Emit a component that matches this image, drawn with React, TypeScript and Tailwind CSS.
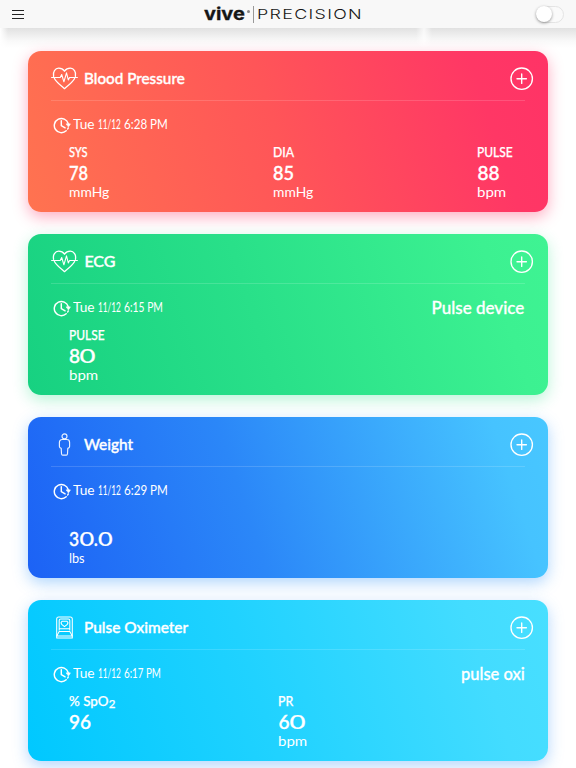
import { useLayoutEffect, useRef, useState } from "react";
import type { ReactNode } from "react";

/** A single line of text whose glyphs are condensed or widened to fill a given width. */
function Fit({ w, className = "", children }: { w: number; className?: string; children: ReactNode }) {
  const ref = useRef<HTMLSpanElement>(null);
  const [scale, setScale] = useState(1);
  useLayoutEffect(() => {
    if (ref.current) setScale(w / ref.current.offsetWidth);
  }, [w]);
  return (
    <span className={`block shrink-0 whitespace-nowrap ${className}`} style={{ width: w }}>
      <span ref={ref} className="inline-block origin-left" style={{ transform: `scaleX(${scale})` }}>
        {children}
      </span>
    </span>
  );
}

function HeartIcon() {
  return (
    <svg className="h-[23px] w-[27px]" viewBox="0 0 27 23" fill="none" stroke="white" strokeWidth="1.3" strokeLinejoin="round" strokeLinecap="round">
      <path d="M2.6 9.300C1.600 4.700 4.200 1.200 7.700 1.200c2.600 0 4.500 1.100 5.800 3 1.300-1.900 3.200-3 5.800-3 3.500 0 6.100 3.500 5.100 8.100M3.400 11.500c1.800 3.500 6.300 7 10.100 10.200 3.800-3.200 8.300-6.700 10.100-10.200" />
      <path strokeWidth="1.1" d="M.6 10.500h8.600l1.500-3 2.200 7.300 2.600-8.900 1.800 7 1.300-2.400h7.800" />
    </svg>
  );
}

function PersonIcon() {
  return (
    <svg className="h-[23px] w-[27px]" viewBox="0 0 27 23" fill="none" stroke="white" strokeWidth="1.15" strokeOpacity=".9" strokeLinejoin="round">
      <circle cx="13.5" cy="3.300" r="2.500" />
      <path d="M11.200 6.500h4.600c1.800 0 2.800 1.200 2.800 2.900v4.100c0 1.100-.6 1.600-1.800 1.900l-.3 5.300c-.1 1-.5 1.400-1.200 1.400h-3.600c-.7 0-1.100-.4-1.200-1.400l-.3-5.300c-1.200-.3-1.800-.8-1.800-1.900V9.400c0-1.700 1-2.900 2.800-2.900Z" />
    </svg>
  );
}

function OximeterIcon() {
  return (
    <svg className="h-[23px] w-[27px]" viewBox="0 0 27 23" fill="none" stroke="white" strokeWidth="1.05" strokeLinejoin="round">
      <path d="M5.700 21.900V3q0-2 2-2h11.600q2 0 2 2v18.900Z" />
      <path d="M8.200 14.500V4.500Q8.200 3 9.700 3h7.600q1.500 0 1.500 1.500v10M8.200 12.800h10.600M8.200 15.500h10.600l2.500 4.500H5.700l2.500-4.500Z" />
      <path d="M11 5.200h5l1 1.500-.7 1.700-2.800 2.300-2.800-2.300-.7-1.700Z" />
    </svg>
  );
}

function ClockIcon() {
  return (
    <svg className="h-[17px] w-[18px]" viewBox="0 0 18 17" fill="none" stroke="white" strokeWidth="1.45" strokeLinecap="round" strokeLinejoin="round">
      <path d="M15.200 6.500A7.100 7.100 0 1 0 13.200 13.800" />
      <path d="M8.300 3.600v5.100l3.800 2.100" />
      <path d="M13.600 6.900h3.700l-1.700 2.700Z" fill="white" strokeWidth=".8" />
      <path d="M15.300 10.900l-.6 1.100" />
    </svg>
  );
}

function PlusIcon() {
  return (
    <svg className="h-6 w-6" viewBox="0 0 24 24" fill="none" stroke="white" strokeWidth="1.35" strokeLinecap="round">
      <circle cx="11.700" cy="11.700" r="10.700" />
      <path d="M11.700 7v9.400M7 11.700h9.400" />
    </svg>
  );
}

/** The wide, circular zero of large readings. */
function Zero() {
  return <span className="mx-[2.500px] inline-block scale-x-[1.45] font-normal [-webkit-text-stroke:0.2px_white]">0</span>;
}

type Text = { w: number; text: ReactNode };
type Reading = { at: string; label?: Text; value: Text; unit?: Text };
type CardData = {
  surface: string;
  icon: ReactNode;
  title: Text;
  time: { w: number; clock: string };
  device?: Text;
  readings: Reading[];
};

const cards: CardData[] = [
  {
    surface: "bg-[linear-gradient(72deg,#ff7350_0%,#ff5558_48%,#ff3765_86%,#ff3366_100%)] shadow-[0_5px_15px_rgba(255,51,102,0.4)]",
    icon: <HeartIcon />,
    title: { w: 101, text: "Blood Pressure" },
    time: { w: 44, clock: "6:28 PM" },
    readings: [
      { at: "ml-[40.500px]", label: { w: 19, text: "SYS" }, value: { w: 19, text: "78" }, unit: { w: 40, text: "mmHg" } },
      { at: "ml-[245px]", label: { w: 21, text: "DIA" }, value: { w: 21, text: "85" }, unit: { w: 40, text: "mmHg" } },
      { at: "ml-[449px]", label: { w: 36, text: "PULSE" }, value: { w: 22, text: "88" }, unit: { w: 29, text: "bpm" } },
    ],
  },
  {
    surface: "bg-[linear-gradient(72deg,#17d181_0%,#29e089_44%,#3cf191_88%,#3ff393_100%)] shadow-[0_5px_15px_rgba(38,220,134,0.32)]",
    icon: <HeartIcon />,
    title: { w: 31, text: "ECG" },
    time: { w: 39, clock: "6:15 PM" },
    device: { w: 93, text: "Pulse device" },
    readings: [{ at: "ml-[40.500px]", label: { w: 36, text: "PULSE" }, value: { w: 27, text: <>8<Zero /></> }, unit: { w: 29, text: "bpm" } }],
  },
  {
    surface: "bg-[linear-gradient(72deg,#1c62f5_0%,#2b87f8_42%,#46c3ff_90%,#48c7ff_100%)] shadow-[0_5px_15px_rgba(50,150,250,0.38)]",
    icon: <PersonIcon />,
    title: { w: 49, text: "Weight" },
    time: { w: 44, clock: "6:29 PM" },
    readings: [{ at: "ml-[40.500px]", value: { w: 44, text: <>3<Zero />.<Zero /></> }, unit: { w: 16, text: "lbs" } }],
  },
  {
    surface: "bg-[linear-gradient(72deg,#00c8ff_0%,#20d2ff_44%,#43dcff_85%,#48dfff_100%)] shadow-[0_5px_15px_rgba(60,150,250,0.38)]",
    icon: <OximeterIcon />,
    title: { w: 104, text: "Pulse Oximeter" },
    time: { w: 37, clock: "6:17 PM" },
    device: { w: 64, text: "pulse oxi" },
    readings: [
      { at: "ml-[40.500px]", label: { w: 46, text: <>% SpO<span className="relative top-[2px] text-[12px]">2</span></> }, value: { w: 22, text: "96" } },
      { at: "ml-[250px]", label: { w: 15, text: "PR" }, value: { w: 27, text: <>6<Zero /></> }, unit: { w: 29, text: "bpm" } },
    ],
  },
];

function ReadingBlock({ r }: { r: Reading }) {
  return (
    <div className={`col-start-1 row-start-1 w-12 ${r.at}`}>
      <div className="-mt-px mb-px h-5">{r.label && <Fit w={r.label.w} className="text-[14px] leading-5 font-medium [-webkit-text-stroke:0.25px_white]">{r.label.text}</Fit>}</div>
      <Fit w={r.value.w} className="h-5 text-[19px] leading-5 font-medium [-webkit-text-stroke:0.4px_white]">{r.value.text}</Fit>
      {r.unit && <Fit w={r.unit.w} className="h-[18px] text-[13.500px] leading-[18px]">{r.unit.text}</Fit>}
    </div>
  );
}

function Card({ c }: { c: CardData }) {
  return (
    <section className={`h-[160.500px] shrink-0 rounded-[13px] text-white ${c.surface}`}>
      <header className="flex h-[49px] items-center pt-[6px] pr-[14px] pl-[23px]">
        {c.icon}
        <Fit w={c.title.w} className="-mt-[2px] ml-[6px] text-[16px] leading-5 font-medium [-webkit-text-stroke:0.4px_white]">{c.title.text}</Fit>
        <div className="ml-auto"><PlusIcon /></div>
      </header>
      <div className="mr-[22.500px] ml-[22.500px] h-px bg-white/15" />
      <div className="flex h-[42px] items-center pt-[6px] pr-[23px] pl-[25px]">
        <ClockIcon />
        <div className="-mt-[2px] ml-[2px] flex text-[14px] leading-5">
          <Fit w={21.5}>Tue</Fit>
          <Fit w={23} className="ml-[3px]">11/12</Fit>
          <Fit w={c.time.w} className="ml-[3px]">{c.time.clock}</Fit>
        </div>
        {c.device && <Fit w={c.device.w} className="-mt-px ml-auto text-[17px] leading-5 font-medium [-webkit-text-stroke:0.3px_white]">{c.device.text}</Fit>}
      </div>
      <div className="grid">
        {c.readings.map((r, i) => <ReadingBlock key={i} r={r} />)}
      </div>
    </section>
  );
}

export default function App() {
  return (
    <div className="flex h-[768px] w-[576px] flex-col overflow-hidden bg-white font-[Lato,sans-serif]">
      <header className="flex h-[28px] shrink-0 items-center bg-[#f8f8f8] pl-[11.500px]">
        <div className="flex w-[12.500px] flex-col gap-[3px]">
          <span className="h-px bg-[#222]" />
          <span className="h-px bg-[#222]" />
          <span className="h-px bg-[#222]" />
        </div>
        <div className="ml-[180px] flex h-full items-center text-[#161616]">
          <Fit w={41} className="-mt-px font-[Inter,sans-serif] text-[17px] leading-5 font-bold [-webkit-text-stroke:0.3px_#161616]">vive</Fit>
          <span className="mb-[6px] ml-[2px] h-[3px] w-[3px] rounded-full bg-[#888]" />
          <span className="ml-[3px] h-[17px] w-px bg-[#999]" />
          <Fit w={106} className="ml-[3px] font-[Inter,sans-serif] text-[13.500px] leading-5 font-light tracking-[1px]">PRECISION</Fit>
        </div>
        <div className="mr-[12px] ml-auto flex h-[17px] w-[28px] items-center rounded-full border border-[#e4e4e4] bg-[#fafafa]">
          <span className="-ml-px h-4 w-4 shrink-0 rounded-full bg-white shadow-[0_1px_3px_rgba(0,0,0,0.4)]" />
        </div>
      </header>
      <div className="flex h-[23px] shrink-0 bg-[linear-gradient(to_bottom,#e1e1e1_0px,#ececec_6px,#f9f9f9_13px,#ffffff_20px)]">
        <span className="h-full w-[8px] bg-[linear-gradient(to_right,white,transparent)]" />
        <span className="ml-[408px] h-full w-[16px] bg-[linear-gradient(to_right,transparent,rgba(255,255,255,0.75),transparent)]" />
      </div>
      <main className="flex flex-col gap-[22.600px] pr-[28.500px] pl-[28.400px]">
        {cards.map((c) => <Card key={c.title.w} c={c} />)}
      </main>
    </div>
  );
}
